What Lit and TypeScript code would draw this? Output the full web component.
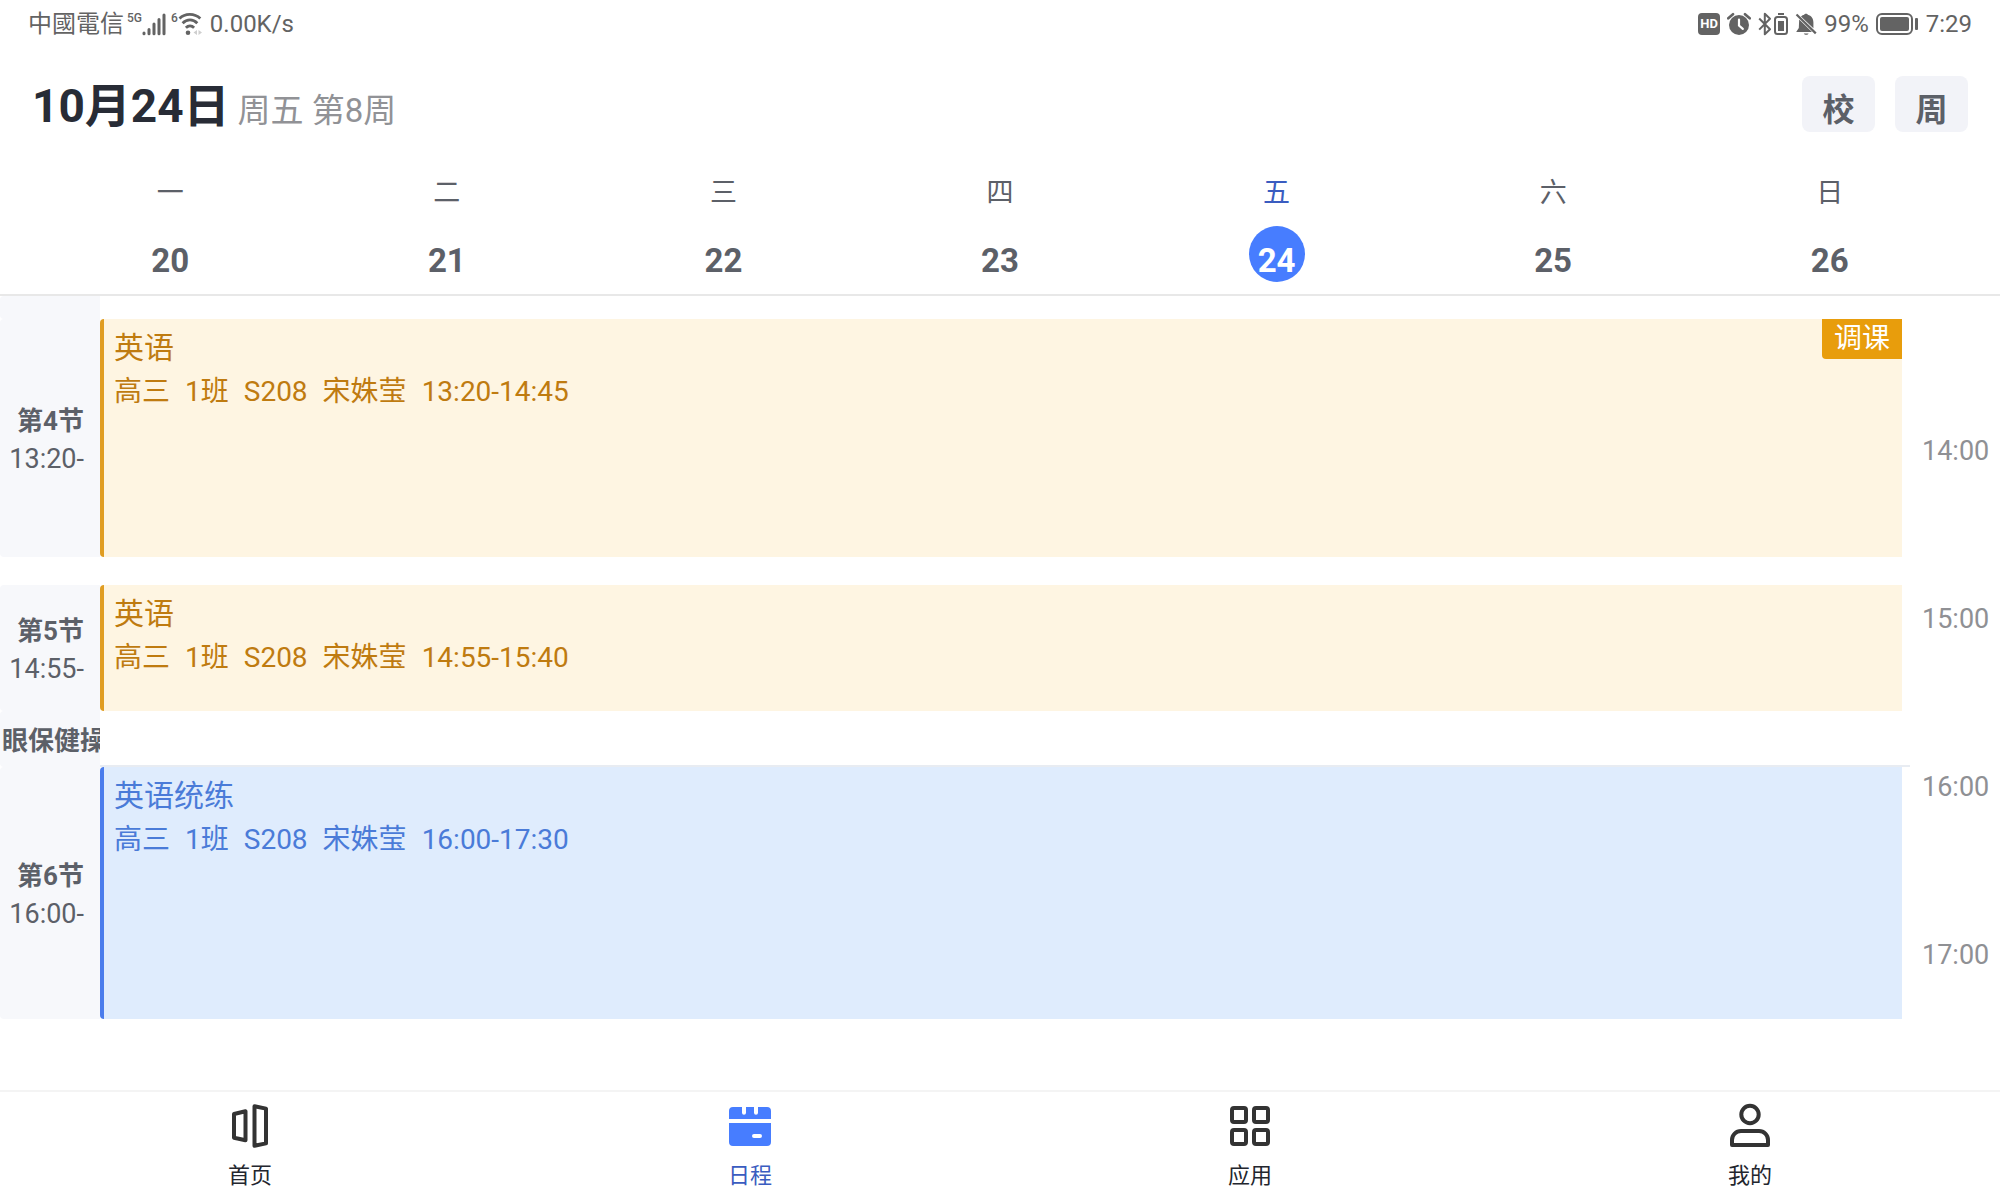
import { LitElement, html, css, svg, nothing } from "lit";
import { customElement, property, state } from "lit/decorators.js";
import { classMap } from "lit/directives/class-map.js";
import { styleMap } from "lit/directives/style-map.js";

/** Height of one minute on the timeline, in tenths of a pixel. */
const MINUTE = 28;
const px = (minutes: number) => `${Math.round((minutes * MINUTE) / 10)}px`;
const minutes = (clock: string) => {
  const [h, m] = clock.split(":").map(Number);
  return h * 60 + m;
};

interface Day {
  name: string;
  date: number;
}

interface Slot {
  title: string;
  start: string;
  end: string;
  pause?: boolean;
}

interface Lesson {
  subject: string;
  details: string[];
  start: string;
  end: string;
  tone: "amber" | "blue";
  badge?: string;
}

const DAYS: Day[] = [
  { name: "一", date: 20 },
  { name: "二", date: 21 },
  { name: "三", date: 22 },
  { name: "四", date: 23 },
  { name: "五", date: 24 },
  { name: "六", date: 25 },
  { name: "日", date: 26 },
];

const DAY_START = "13:20";

const SLOTS: Slot[] = [
  { title: "第4节", start: "13:20", end: "14:45" },
  { title: "第5节", start: "14:55", end: "15:40" },
  { title: "眼保健操", start: "15:40", end: "16:00", pause: true },
  { title: "第6节", start: "16:00", end: "17:30" },
];

const LESSONS: Lesson[] = [
  {
    subject: "英语",
    details: ["高三", "1班", "S208", "宋姝莹"],
    start: "13:20",
    end: "14:45",
    tone: "amber",
    badge: "调课",
  },
  {
    subject: "英语",
    details: ["高三", "1班", "S208", "宋姝莹"],
    start: "14:55",
    end: "15:40",
    tone: "amber",
  },
  {
    subject: "英语统练",
    details: ["高三", "1班", "S208", "宋姝莹"],
    start: "16:00",
    end: "17:30",
    tone: "blue",
  },
];

const HOURS = ["14:00", "15:00", "16:00", "17:00"];

@customElement("status-bar")
export class StatusBar extends LitElement {
  static styles = css`
    :host {
      display: block;
      color: #636363;
    }
    .bar {
      display: flex;
      justify-content: space-between;
      align-items: center;
      height: 48px;
      padding: 0 28px;
      font-size: 24px;
      line-height: 32px;
    }
    .group {
      display: flex;
      align-items: center;
    }
    .carrier {
      font-family: Roboto, "Noto Sans CJK TC", sans-serif;
      margin-right: 3px;
    }
    .tag {
      align-self: flex-start;
      font: 500 12px/20px Roboto, sans-serif;
    }
    .signal {
      margin-right: 5px;
    }
    .wifi {
      margin-right: 6px;
    }
    .icons {
      gap: 7px;
    }
    .pair {
      display: flex;
      gap: 2px;
    }
    svg {
      display: block;
    }
    .hd {
      width: 22px;
      height: 22px;
      border-radius: 4px;
      background: #636363;
      color: #fff;
      font: bold 13px/22px Roboto, sans-serif;
      text-align: center;
    }
  `;

  render() {
    return html`
      <div class="bar">
        <div class="group">
          <span class="carrier">中國電信</span>
          <span class="tag">5G</span>
          <svg class="signal" width="24" height="24" viewBox="0 0 24 24" stroke="currentColor" stroke-width="3" stroke-linecap="round">
            <path d="M2 21v.8M7 17.500v4.300M12 12v9.800M17 7.500v14.300M22 3v18.800" />
          </svg>
          <span class="tag">6</span>
          <svg class="wifi" width="26" height="24" viewBox="0 0 26 24" fill="none" stroke="currentColor" stroke-width="2.800">
            <path d="M1.500 6.400C7 .9 16.500 .9 22.300 6.400" />
            <path d="M4.600 11.200C9 6.800 15 6.800 19.300 11.200" />
            <path d="M7.900 15.800C10.300 13.400 13.700 13.400 16.100 15.800" />
            <circle cx="10" cy="20.800" r="2.300" fill="currentColor" stroke="none" />
            <path d="M19 18v5l-3.500-2.500zM20.500 18v5l3.500-2.500z" fill="#cfcfcf" stroke="none" />
          </svg>
          <span>0.00K/s</span>
        </div>
        <div class="group icons">
          <span class="hd">HD</span>
          <svg width="24" height="24" viewBox="0 0 24 24">
            <circle cx="12" cy="13" r="10" fill="currentColor" />
            <path d="M1.300 6.300 6 2.200M22.700 6.300 18 2.200" stroke="currentColor" stroke-width="2.600" stroke-linecap="round" />
            <path d="M12 7.500v6l3.800 3.400" fill="none" stroke="#fff" stroke-width="2.200" stroke-linecap="round" />
          </svg>
          <div class="pair">
            <svg width="14" height="24" viewBox="0 0 14 24" fill="none" stroke="currentColor" stroke-width="2">
              <path d="M1.200 6.500 12 17.300 6.800 22.300V1.800L12 6.800 1.200 17.600" stroke-linejoin="round" />
            </svg>
            <svg width="14" height="24" viewBox="0 0 14 24" fill="none" stroke="currentColor" stroke-width="2">
              <path d="M4 2h6" />
              <rect x="1" y="5" width="12" height="17" rx="2.500" />
              <rect x="4" y="9" width="6" height="10" fill="currentColor" stroke="none" />
            </svg>
          </div>
          <svg width="22" height="24" viewBox="0 0 22 24">
            <path d="M4.200 7.600 17 20H1.200l2.600-4zM6 4.600C7 3.600 8.200 3 9.200 2.800c.4-1.400 3.200-1.400 3.600 0 3.600.8 5.600 3.800 5.600 7.600v5.800z" fill="currentColor" />
            <path d="M8.800 21.400h4.800c-.6 1.900-4.200 1.900-4.800 0z" fill="currentColor" />
            <path d="M1.500 2.500 20.800 21.400" stroke="currentColor" stroke-width="2.200" />
          </svg>
          <span>99%</span>
          <svg width="43" height="24" viewBox="0 0 43 24">
            <rect x="1" y="2" width="35" height="20" rx="5" fill="none" stroke="currentColor" stroke-width="2" />
            <rect x="4" y="5" width="29" height="14" rx="2" fill="currentColor" />
            <rect x="39" y="6" width="3" height="12" rx="1" fill="currentColor" />
          </svg>
          <span>7:29</span>
        </div>
      </div>
    `;
  }
}

@customElement("lesson-card")
export class LessonCard extends LitElement {
  @property({ attribute: false }) lesson!: Lesson;

  static styles = css`
    :host {
      display: block;
    }
    .card {
      display: flex;
      justify-content: space-between;
      align-items: flex-start;
      box-sizing: border-box;
      height: 100%;
      border-left: 4px solid;
      border-radius: 4px 0 0 4px;
    }
    .amber {
      border-color: #e09d22;
      background: #fef5e2;
      color: #bf7b10;
    }
    .blue {
      border-color: #4a7cec;
      background: #dfecfd;
      color: #4a7bd8;
    }
    .text {
      padding: 7px 10px;
      line-height: 44px;
    }
    h2 {
      margin: 0;
      font-size: 30px;
      font-weight: 400;
    }
    .details {
      display: flex;
      gap: 15px;
      margin: 0;
      font-size: 28px;
    }
    .badge {
      padding: 0 12px;
      border-bottom-left-radius: 4px;
      background: #e89d0c;
      color: #fff;
      font-size: 28px;
      line-height: 40px;
    }
  `;

  render() {
    const { subject, details, start, end, tone, badge } = this.lesson;
    return html`
      <article class="card ${tone}">
        <div class="text">
          <h2>${subject}</h2>
          <p class="details">
            ${details.map((part) => html`<span>${part}</span>`)}
            <span>${start}-${end}</span>
          </p>
        </div>
        ${badge ? html`<span class="badge">${badge}</span>` : nothing}
      </article>
    `;
  }
}

@customElement("day-timeline")
export class DayTimeline extends LitElement {
  static styles = css`
    :host {
      display: block;
    }
    .timeline {
      display: grid;
      grid-template-columns: 100px 1fr 90px;
    }
    .lead {
      height: 23px;
    }
    .slot {
      display: flex;
      flex-direction: column;
      justify-content: center;
      box-sizing: border-box;
      padding: 4px 16px 0 2px;
      overflow: hidden;
      border-radius: 4px 0 0 4px;
      background: #f7f8fb;
      color: #5c6068;
      font-size: 27px;
      line-height: 38px;
      text-align: right;
      white-space: nowrap;
    }
    .slot b {
      font-size: 26px;
      font-weight: 700;
    }
    .card {
      margin-right: 8px;
    }
    .pause {
      box-sizing: border-box;
      border-bottom: 2px solid #e8ecf2;
    }
    .hour {
      padding-left: 12px;
      color: #8f9094;
      font-size: 27px;
      line-height: 40px;
    }
  `;

  private place(previousEnd: string, start: string, end: string) {
    return styleMap({
      marginTop: px(minutes(start) - minutes(previousEnd)),
      height: px(minutes(end) - minutes(start)),
    });
  }

  render() {
    return html`
      <div class="timeline">
        <div>
          <div class="slot lead"></div>
          ${SLOTS.map(
            (slot, i) => html`
              <div class="slot" style=${this.place(SLOTS[i - 1]?.end ?? DAY_START, slot.start, slot.end)}>
                <b>${slot.title}</b>
                ${slot.pause ? nothing : html`<span>${slot.start}-</span>`}
              </div>
            `
          )}
        </div>
        <div>
          <div class="lead"></div>
          ${LESSONS.map((lesson, i) => {
            const previous = LESSONS[i - 1]?.end ?? DAY_START;
            const pause = SLOTS.find((s) => s.pause && s.start === previous && s.end === lesson.start);
            return html`
              ${pause ? html`<div class="pause" style=${this.place(previous, pause.start, pause.end)}></div>` : nothing}
              <lesson-card
                class="card"
                .lesson=${lesson}
                style=${this.place(pause?.end ?? previous, lesson.start, lesson.end)}
              ></lesson-card>
            `;
          })}
        </div>
        <div>
          <div class="lead"></div>
          ${HOURS.map(
            (hour, i) => html`
              <div
                class="hour"
                style=${styleMap({
                  marginTop: i === 0 ? px(minutes(hour) - minutes(DAY_START)) : "0",
                  height: i === HOURS.length - 1 ? "auto" : px(60),
                })}
              >
                ${hour}
              </div>
            `
          )}
        </div>
      </div>
    `;
  }
}

const TABS = [
  {
    label: "首页",
    icon: svg`
      <g fill="none" stroke="currentColor" stroke-width="4" stroke-linejoin="round">
        <path d="M8 12 19.500 9.200V38.300L8 35.800z" />
        <path d="M28.500 4.200 40 6.600V41.400L28.500 43.800z" />
      </g>`,
  },
  {
    label: "日程",
    icon: svg`
      <g fill="currentColor">
        <path d="M7 5h9v5.700a2 2 0 0 0 4 0V5h8v5.700a2 2 0 0 0 4 0V5h9a4 4 0 0 1 4 4v8H3V9a4 4 0 0 1 4-4z" />
        <path fill-rule="evenodd" d="M3 21h42v19a4 4 0 0 1-4 4H7a4 4 0 0 1-4-4zM28 32a2 2 0 0 0 0 4h6a2 2 0 0 0 0-4z" />
      </g>`,
  },
  {
    label: "应用",
    icon: svg`
      <g fill="none" stroke="currentColor" stroke-width="4">
        <rect x="6" y="6" width="14" height="14" rx="2" />
        <rect x="28" y="6" width="14" height="14" rx="2" />
        <rect x="6" y="28" width="14" height="14" rx="2" />
        <rect x="28" y="28" width="14" height="14" rx="2" />
      </g>`,
  },
  {
    label: "我的",
    icon: svg`
      <g fill="none" stroke="currentColor" stroke-width="4" stroke-linejoin="round">
        <circle cx="24" cy="12.500" r="8.700" />
        <path d="M6 43V38a9 9 0 0 1 9-9h18a9 9 0 0 1 9 9v5z" />
      </g>`,
  },
];

@customElement("tab-bar")
export class TabBar extends LitElement {
  @property() active = "日程";

  static styles = css`
    :host {
      display: block;
    }
    .tabs {
      display: grid;
      grid-template-columns: repeat(4, 1fr);
      border-top: 2px solid #f4f4f4;
    }
    .tab {
      display: flex;
      flex-direction: column;
      align-items: center;
      padding: 10px 0 8px;
      gap: 10px;
      color: #23262e;
      font-size: 22px;
      line-height: 32px;
      text-decoration: none;
    }
    .icon {
      display: block;
      width: 48px;
      height: 48px;
      color: #333;
    }
    .active {
      color: #3a5cc0;
    }
    .active .icon {
      color: #477dff;
    }
  `;

  render() {
    return html`
      <nav class="tabs">
        ${TABS.map(
          ({ label, icon }) => html`
            <a class=${classMap({ tab: true, active: label === this.active })} href="#${label}">
              <svg class="icon" viewBox="0 0 48 48" aria-hidden="true">${icon}</svg>
              ${label}
            </a>
          `
        )}
      </nav>
    `;
  }
}

@customElement("app-root")
export class AppRoot extends LitElement {
  @state() private selected = 24;

  static styles = css`
    :host {
      display: block;
      font-family: Roboto, "Noto Sans CJK SC", sans-serif;
      background: #fff;
    }
    .app {
      display: flex;
      flex-direction: column;
      min-height: 100vh;
    }
    .header {
      display: flex;
      justify-content: space-between;
      align-items: flex-start;
      padding: 28px 32px 40px;
    }
    .heading {
      display: flex;
      align-items: baseline;
      gap: 8px;
      padding-top: 4px;
    }
    h1 {
      margin: 0;
      color: #282c36;
      font-size: 46px;
      font-weight: 700;
      line-height: 52px;
    }
    .week-info {
      color: #919296;
      font-size: 33px;
      line-height: 40px;
    }
    .actions {
      display: flex;
      gap: 20px;
    }
    button {
      border: 0;
      font-family: inherit;
      cursor: pointer;
    }
    .action {
      width: 73px;
      height: 56px;
      padding: 12px 0 0;
      border-radius: 8px;
      background: #f2f3f8;
      color: #5c6068;
      font-size: 32px;
      font-weight: 700;
      line-height: 44px;
    }
    .week {
      display: grid;
      grid-template-columns: repeat(7, 1fr);
      padding: 0 32px 12px;
      border-bottom: 2px solid #e8e8e8;
    }
    .day {
      display: flex;
      flex-direction: column;
      align-items: center;
      gap: 12px;
      padding: 0;
      background: none;
      color: #5c6068;
      font-size: 27px;
      line-height: 42px;
    }
    .date {
      box-sizing: border-box;
      width: 56px;
      height: 56px;
      padding-top: 12px;
      border-radius: 50%;
      font-size: 33px;
      font-weight: 700;
      line-height: 46px;
    }
    .selected {
      color: #3a5cc0;
    }
    .selected .date {
      background: #477dff;
      color: #fff;
    }
    .content {
      flex: 1;
    }
  `;

  render() {
    return html`
      <div class="app" lang="zh-CN">
        <status-bar></status-bar>
        <header class="header">
          <div class="heading">
            <h1>10月24日</h1>
            <span class="week-info">周五 第8周</span>
          </div>
          <div class="actions">
            <button class="action" type="button">校</button>
            <button class="action" type="button">周</button>
          </div>
        </header>
        <div class="week">
          ${DAYS.map(
            ({ name, date }) => html`
              <button
                type="button"
                class=${classMap({ day: true, selected: date === this.selected })}
                @click=${() => (this.selected = date)}
              >
                <span>${name}</span>
                <span class="date">${date}</span>
              </button>
            `
          )}
        </div>
        <day-timeline class="content"></day-timeline>
        <tab-bar></tab-bar>
      </div>
    `;
  }
}
